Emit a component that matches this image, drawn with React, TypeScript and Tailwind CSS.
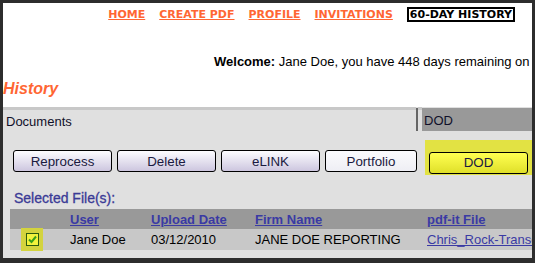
import React from 'react';

const navLinks = ['HOME', 'CREATE PDF', 'PROFILE', 'INVITATIONS'];

const buttons = [
  { label: 'Reprocess', w: 'w-[99px]' },
  { label: 'Delete', w: 'w-[99px]' },
  { label: 'eLINK', w: 'w-[99px]' },
];

export default function App() {
  return (
    <div className="w-[535px] h-[263px] bg-[#2d2d2d] pt-[3px] pl-[3px] pr-[3px] pb-[5px] text-left font-['Liberation_Sans',Arial,sans-serif]">
      <div className="w-full h-full bg-white overflow-hidden flex flex-col">

        {/* top nav */}
        <div className="mt-[4px] h-[15px] flex justify-end items-center gap-[14px] pr-[17px] font-['DejaVu_Sans',Verdana,sans-serif] font-bold text-[11px] leading-[13px]">
          {navLinks.map(l => (
            <a key={l} className="text-[#ff6633] underline whitespace-nowrap">{l}</a>
          ))}
          <span className="h-[15px] border-2 border-black px-[1px] flex items-center text-black whitespace-nowrap">60-DAY HISTORY</span>
        </div>

        {/* welcome */}
        <div className="mt-[32px] pl-[211px] h-[15px] text-[13px] leading-[15px] text-black whitespace-nowrap overflow-hidden">
          <b>Welcome:</b> Jane Doe, you have 448 days remaining on
        </div>

        {/* title */}
        <div className="mt-[11px] h-[18px] text-[16px] leading-[18px] font-bold italic text-[#ff6633]">History</div>

        {/* gray area */}
        <div className="mt-[9px] flex-1 bg-[#e0e0e0] flex flex-col">

          <div className="h-[24px] flex">
            <div className="w-[413px] border-t-[3px] border-[#c8c8c8] pt-[4px] pl-[3px] text-[13px] leading-[15px] text-[#10102a]">Documents</div>
            <div className="w-[2px] mt-[1px] bg-[#666666]"></div>
            <div className="w-[4px] border-t-[3px] border-[#c8c8c8]"></div>
            <div className="flex-1 mt-[1px] bg-[#999999] pt-[5px] pl-[2px] text-[13px] leading-[15px] text-[#10102a]">DOD</div>
          </div>

          {/* buttons */}
          <div className="mt-[9px] h-[35px] flex items-start pl-[10px]">
            <div className="mt-[10px] flex gap-[5px]">
              {buttons.map(b => (
                <button key={b.label} className={`${b.w} h-[22px] rounded-[3px] border border-black bg-gradient-to-b from-[#fdfdff] to-[#cdc6df] text-[13.33px] leading-[15px] text-[#1a1a40]`}>
                  {b.label}
                </button>
              ))}
              <button className="w-[92px] h-[22px] rounded-[3px] border border-black bg-gradient-to-b from-[#fbfbfd] to-[#eeeef4] text-[13.33px] leading-[15px] text-[#1a1a40]">Portfolio</button>
            </div>
            <div className="ml-[8px] h-[35px] flex-1 bg-[#e2e243] pt-[10px] pl-[4px]">
              <button className="w-[99px] h-[22px] rounded-[3px] border border-black bg-gradient-to-b from-[#ffff50] to-[#e0e028] text-[13.33px] leading-[15px] text-[#1a1a40]">DOD</button>
            </div>
          </div>

          <div className="mt-[15px] pl-[11px] h-[16px] text-[14px] leading-[16px] text-[#3a3a96] [-webkit-text-stroke:0.3px_#3a3a96]">Selected File(s):</div>

          {/* table */}
          <div className="mt-[3px] ml-[7px] flex flex-col">
            <div className="h-[20px] bg-[#999999] flex items-center text-[13px] leading-[15px] font-bold text-[#3a3aa4] whitespace-nowrap">
              <div className="w-[60px] shrink-0"></div>
              <div className="w-[81px] shrink-0"><span className="underline">User</span></div>
              <div className="w-[104px] shrink-0"><span className="underline">Upload Date</span></div>
              <div className="w-[172px] shrink-0"><span className="underline">Firm Name</span></div>
              <div className="shrink-0"><span className="underline">pdf-it File</span></div>
            </div>
            <div className="h-[21px] bg-[#c8c8c8] flex items-center text-[13px] leading-[15px] text-black whitespace-nowrap">
              <div className="w-[60px] h-[21px] shrink-0 flex items-center">
                <div className="ml-[11px] w-[22px] h-[23px] shrink-0 bg-[#d3d33e] flex items-center justify-center">
                  <div className="w-[13px] h-[13px] border border-[#2c5a10] bg-[#f2f23c] flex items-center justify-center">
                    <svg width="9" height="9" viewBox="0 0 9 9">
                      <path d="M1 4.5 L3.5 7 L8 1.5" stroke="#3aa018" strokeWidth="2" fill="none" />
                    </svg>
                  </div>
                </div>
              </div>
              <div className="w-[81px] shrink-0">Jane Doe</div>
              <div className="w-[104px] shrink-0">03/12/2010</div>
              <div className="w-[172px] shrink-0">JANE DOE REPORTING</div>
              <div className="shrink-0 underline text-[#3a3aa4]">Chris_Rock-Transcript.pdf</div>
            </div>
          </div>

        </div>
      </div>
    </div>
  );
}
